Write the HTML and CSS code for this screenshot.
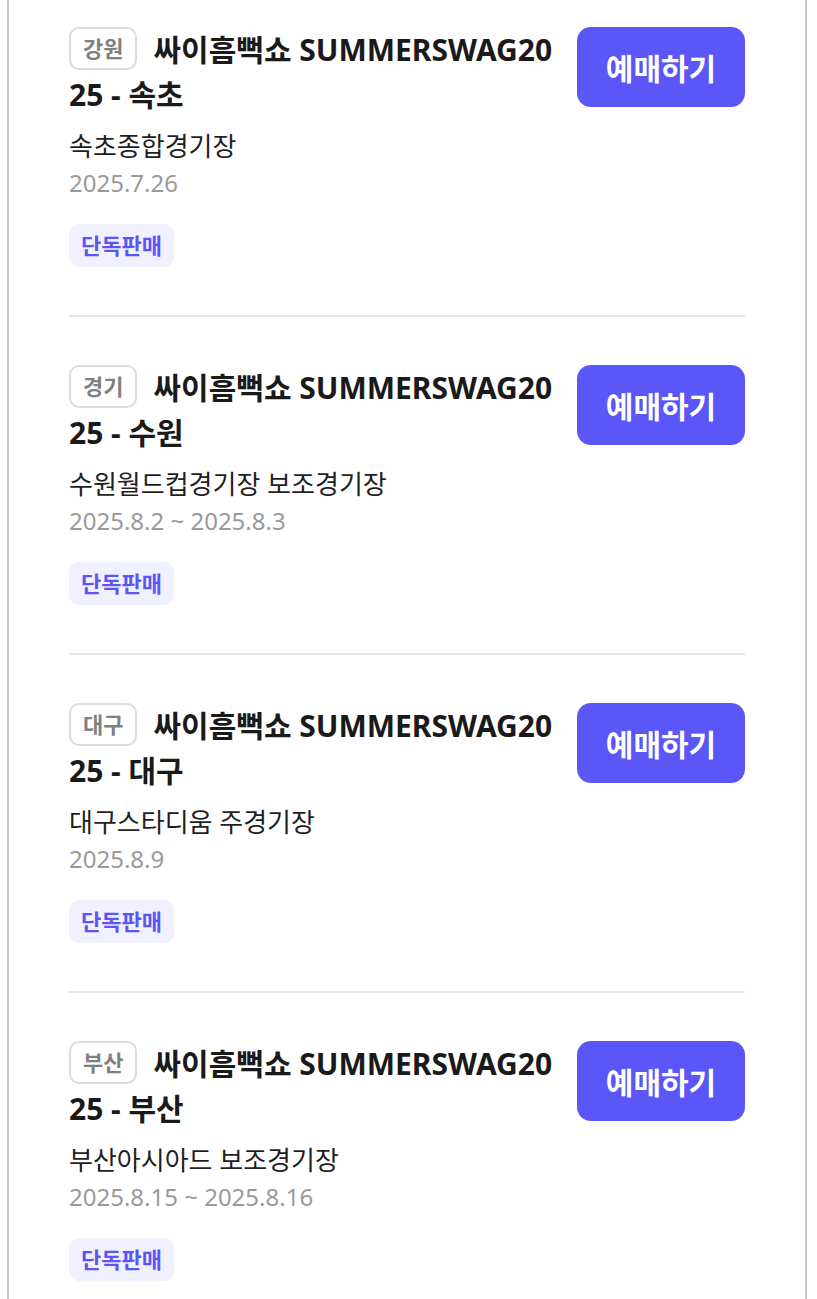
FILE: index.html
```html
<!DOCTYPE html>
<html lang="ko">
<head>
  <meta charset="utf-8">
  <title>싸이흠뻑쇼 SUMMERSWAG2025 예매</title>
  <link rel="stylesheet" href="styles.css">
</head>
<body>
  <div id="page">
    <ul class="concerts">
      <li class="concert">
        <div class="info">
          <span class="region">강원</span>
          <h2 class="title"><span>싸이흠뻑쇼 SUMMERSWAG20</span><span>25 - 속초</span></h2>
          <div class="venue">속초종합경기장</div>
          <div class="date">2025.7.26</div>
          <span class="tag">단독판매</span>
        </div>
        <button class="book">예매하기</button>
      </li>
      <li class="concert">
        <div class="info">
          <span class="region">경기</span>
          <h2 class="title"><span>싸이흠뻑쇼 SUMMERSWAG20</span><span>25 - 수원</span></h2>
          <div class="venue">수원월드컵경기장 보조경기장</div>
          <div class="date">2025.8.2 ~ 2025.8.3</div>
          <span class="tag">단독판매</span>
        </div>
        <button class="book">예매하기</button>
      </li>
      <li class="concert">
        <div class="info">
          <span class="region">대구</span>
          <h2 class="title"><span>싸이흠뻑쇼 SUMMERSWAG20</span><span>25 - 대구</span></h2>
          <div class="venue">대구스타디움 주경기장</div>
          <div class="date">2025.8.9</div>
          <span class="tag">단독판매</span>
        </div>
        <button class="book">예매하기</button>
      </li>
      <li class="concert">
        <div class="info">
          <span class="region">부산</span>
          <h2 class="title"><span>싸이흠뻑쇼 SUMMERSWAG20</span><span>25 - 부산</span></h2>
          <div class="venue">부산아시아드 보조경기장</div>
          <div class="date">2025.8.15 ~ 2025.8.16</div>
          <span class="tag">단독판매</span>
        </div>
        <button class="book">예매하기</button>
      </li>
    </ul>
  </div>
</body>
</html>
```

FILE: styles.css
```css
body {
  margin: 0;
  background-color: #fff;
  color: #1a1a1a;
  font-family: "Noto Sans", "Noto Sans CJK KR", sans-serif;
}

#page {
  width: 800px;
  min-height: 1299px;
  margin-left: 7px;
  padding: 0 60px;
  box-sizing: border-box;
  border-left: 2px solid #c8c8c8;
  border-right: 2px solid #c8c8c8;
}

.concerts {
  list-style: none;
  margin: 0;
  padding: 0;
}

.concert {
  display: flex;
  align-items: flex-start;
  gap: 24px;
  padding: 48px 0;
  border-bottom: 2px solid #e6e6e6;
}

.concert:first-child {
  padding-top: 27px;
}

.concert:last-child {
  border-bottom: none;
}

.info {
  flex: 1;
  min-width: 0;
}

.region {
  float: left;
  margin: 0 16px 0 0;
  padding: 4px 12px;
  border: 2px solid #dcdcdc;
  border-radius: 10px;
  color: #808080;
  font-size: 22px;
  font-weight: 700;
  line-height: 31px;
}

.title {
  margin: 0;
  font-size: 30px;
  font-weight: 700;
  line-height: 45px;
  word-break: break-all;
}

.venue {
  margin-top: 10px;
  font-size: 26px;
  line-height: 38px;
  color: #1f1f1f;
}

.date {
  font-size: 24px;
  line-height: 36px;
  color: #9a9a9a;
}

.tag {
  display: inline-block;
  margin-top: 23px;
  padding: 6px 12px;
  border-radius: 10px;
  background-color: #f1f0fe;
  color: #5b55f6;
  font-size: 22px;
  font-weight: 700;
  line-height: 31px;
}

.book {
  flex: none;
  width: 168px;
  height: 80px;
  border: none;
  border-radius: 14px;
  background-color: #5a56f8;
  color: #fff;
  font-family: inherit;
  font-size: 30px;
  font-weight: 700;
}
```
